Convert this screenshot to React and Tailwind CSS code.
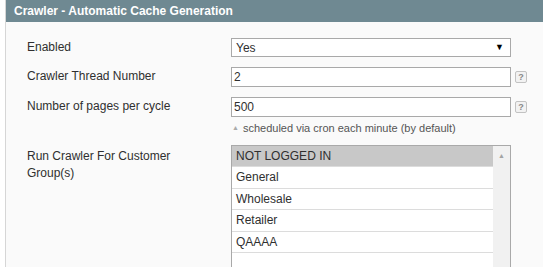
import React from "react";

const groups = ["NOT LOGGED IN", "General", "Wholesale", "Retailer", "QAAAA"];

function Help() {
  return (
    <span className="ml-[4px] mt-[4px] flex h-[12px] w-[12px] shrink-0 items-center justify-center rounded-[2px] border border-[#c2c2c2] bg-[#f2f2f2] text-[9px] font-bold leading-none text-[#888]">
      ?
    </span>
  );
}

export default function App() {
  return (
    <div
      className="h-[267px] w-[543px] overflow-hidden bg-white text-[12px] text-[#2f2f2f]"
      style={{ fontFamily: "'Liberation Sans', Arial, sans-serif" }}
    >
      <div className="ml-[5px] h-full border-l border-[#d6d6d6] bg-[#fafafa]">
        <div className="flex h-[22px] items-center bg-[#6f8992] pl-[8px] text-[12px] font-bold text-white">
          Crawler - Automatic Cache Generation
        </div>

        <div className="flex flex-col pl-[21px] pt-[16px]">
          <div className="flex items-start">
            <div className="w-[204px] pt-[1px] leading-[17px]">Enabled</div>
            <div className="flex h-[19px] w-[280px] items-center justify-between border border-[#a9a9a9] bg-white pl-[4px] pr-[6px]">
              <span>Yes</span>
              <span className="text-[9px] leading-none text-black">▼</span>
            </div>
          </div>

          <div className="mt-[10px] flex items-start">
            <div className="w-[204px] pt-[1px] leading-[17px]">Crawler Thread Number</div>
            <div className="flex h-[20px] w-[280px] items-center border border-[#a9a9a9] bg-white pl-[2px]">2</div>
            <Help />
          </div>

          <div className="mt-[10px] flex items-start">
            <div className="w-[204px] pt-[1px] leading-[17px]">Number of pages per cycle</div>
            <div className="flex flex-col">
              <div className="flex items-start">
                <div className="flex h-[20px] w-[280px] items-center border border-[#a9a9a9] bg-white pl-[2px]">500</div>
                <Help />
              </div>
              <div className="mt-[4px] flex items-center text-[11px] leading-[14px] text-[#555]">
                <span className="ml-[1px] mr-[4px] text-[7px] text-[#aaa]">▲</span>
                scheduled via cron each minute (by default)
              </div>
            </div>
          </div>

          <div className="mt-[10px] flex items-start">
            <div className="w-[204px] pt-[3px] leading-[17px]">
              Run Crawler For Customer
              <br />
              Group(s)
            </div>
            <div className="flex h-[140px] w-[280px] border border-[#a9a9a9] bg-white">
              <div className="flex flex-1 flex-col">
                {groups.map((g, i) => (
                  <div
                    key={g}
                    className={
                      i === 0
                        ? "flex h-[20px] items-center bg-[#c8c8c8] pl-[4px]"
                        : "flex h-[21.5px] items-center border-t border-[#dcdcdc] pl-[4px]"
                    }
                  >
                    {g}
                  </div>
                ))}
                <div className="h-[21px] border-t border-[#dcdcdc]" />
              </div>
              <div className="flex w-[17px] justify-center bg-[#f1f1f1] pt-[6px]">
                <span className="text-[7px] leading-none text-[#a3a3a3]">▲</span>
              </div>
            </div>
          </div>
        </div>
      </div>
    </div>
  );
}
